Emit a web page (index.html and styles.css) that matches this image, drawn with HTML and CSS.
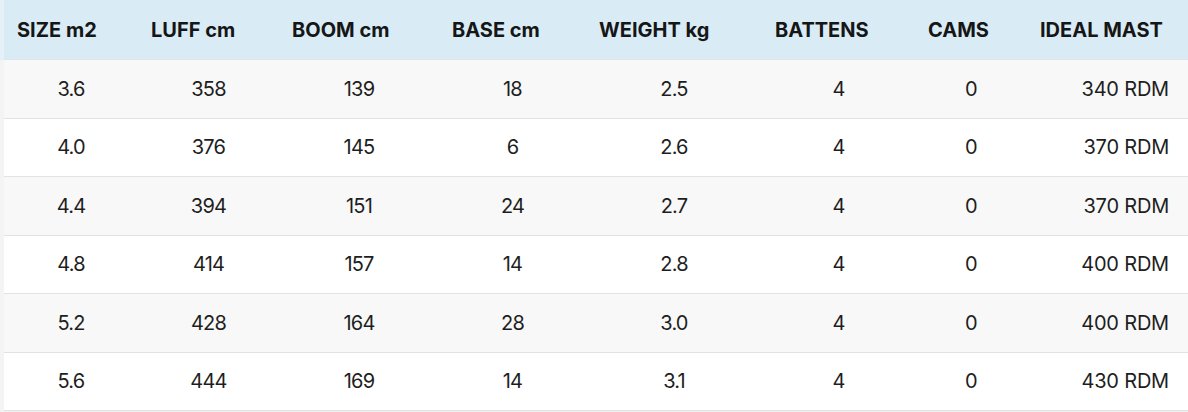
FILE: index.html
```html
<!DOCTYPE html>
<html>
<head>
<meta charset="utf-8">
<link rel="stylesheet" href="styles.css">
</head>
<body>
<div class="wrap">
<table class="specs">
  <colgroup>
    <col class="c1"><col class="c2"><col class="c3"><col class="c4">
    <col class="c5"><col class="c6"><col class="c7"><col class="c8">
  </colgroup>
  <thead>
    <tr>
      <th>SIZE m2</th><th>LUFF cm</th><th>BOOM cm</th><th>BASE cm</th>
      <th>WEIGHT kg</th><th>BATTENS</th><th>CAMS</th><th>IDEAL MAST</th>
    </tr>
  </thead>
  <tbody>
    <tr><td>3.6</td><td>358</td><td>139</td><td>18</td><td>2.5</td><td>4</td><td>0</td><td class="mast">340 RDM</td></tr>
    <tr><td>4.0</td><td>376</td><td>145</td><td>6</td><td>2.6</td><td>4</td><td>0</td><td class="mast">370 RDM</td></tr>
    <tr><td>4.4</td><td>394</td><td>151</td><td>24</td><td>2.7</td><td>4</td><td>0</td><td class="mast">370 RDM</td></tr>
    <tr><td>4.8</td><td>414</td><td>157</td><td>14</td><td>2.8</td><td>4</td><td>0</td><td class="mast">400 RDM</td></tr>
    <tr><td>5.2</td><td>428</td><td>164</td><td>28</td><td>3.0</td><td>4</td><td>0</td><td class="mast">400 RDM</td></tr>
    <tr><td>5.6</td><td>444</td><td>169</td><td>14</td><td>3.1</td><td>4</td><td>0</td><td class="mast">430 RDM</td></tr>
  </tbody>
</table>
</div>
</body>
</html>
```
FILE: styles.css
```css
html, body {
  margin: 0;
  padding: 0;
  background: #f1f1f1;
}
.wrap {
  width: 1184px;
  padding-left: 4px;
  background: linear-gradient(to bottom, #e4f1f8 0, #e4f1f8 60px, #f4f4f4 60px, #f4f4f4 100%);
}
.specs {
  width: 1184px;
  border-collapse: collapse;
  table-layout: fixed;
  font-family: Inter, "Liberation Sans", sans-serif;
  color: #1c1c1c;
}
.c1 { width: 134px; }
.c2 { width: 141px; }
.c3 { width: 160px; }
.c4 { width: 147px; }
.c5 { width: 176px; }
.c6 { width: 153px; }
.c7 { width: 112px; }
.c8 { width: 161px; }
.specs th {
  background: #d9ecf6;
  height: 59px;
  padding: 0 0 0 13px;
  text-align: left;
  font-size: 20px;
  font-weight: 700;
  letter-spacing: 0;
  color: #161616;
  border-bottom: 1px solid #dfe6ea;
}
.specs td {
  height: 57.5px;
  padding: 0;
  text-align: center;
  font-size: 20px;
  font-weight: 400;
  letter-spacing: -0.8px;
  color: #1e1e1e;
  border-bottom: 1px solid #e2e2e2;
}
.specs tbody tr:nth-child(odd) td {
  background: #f8f8f8;
}
.specs tbody tr:nth-child(even) td {
  background: #ffffff;
}
.specs td.mast {
  text-align: right;
  padding-right: 19px;
  letter-spacing: -0.2px;
}
```
